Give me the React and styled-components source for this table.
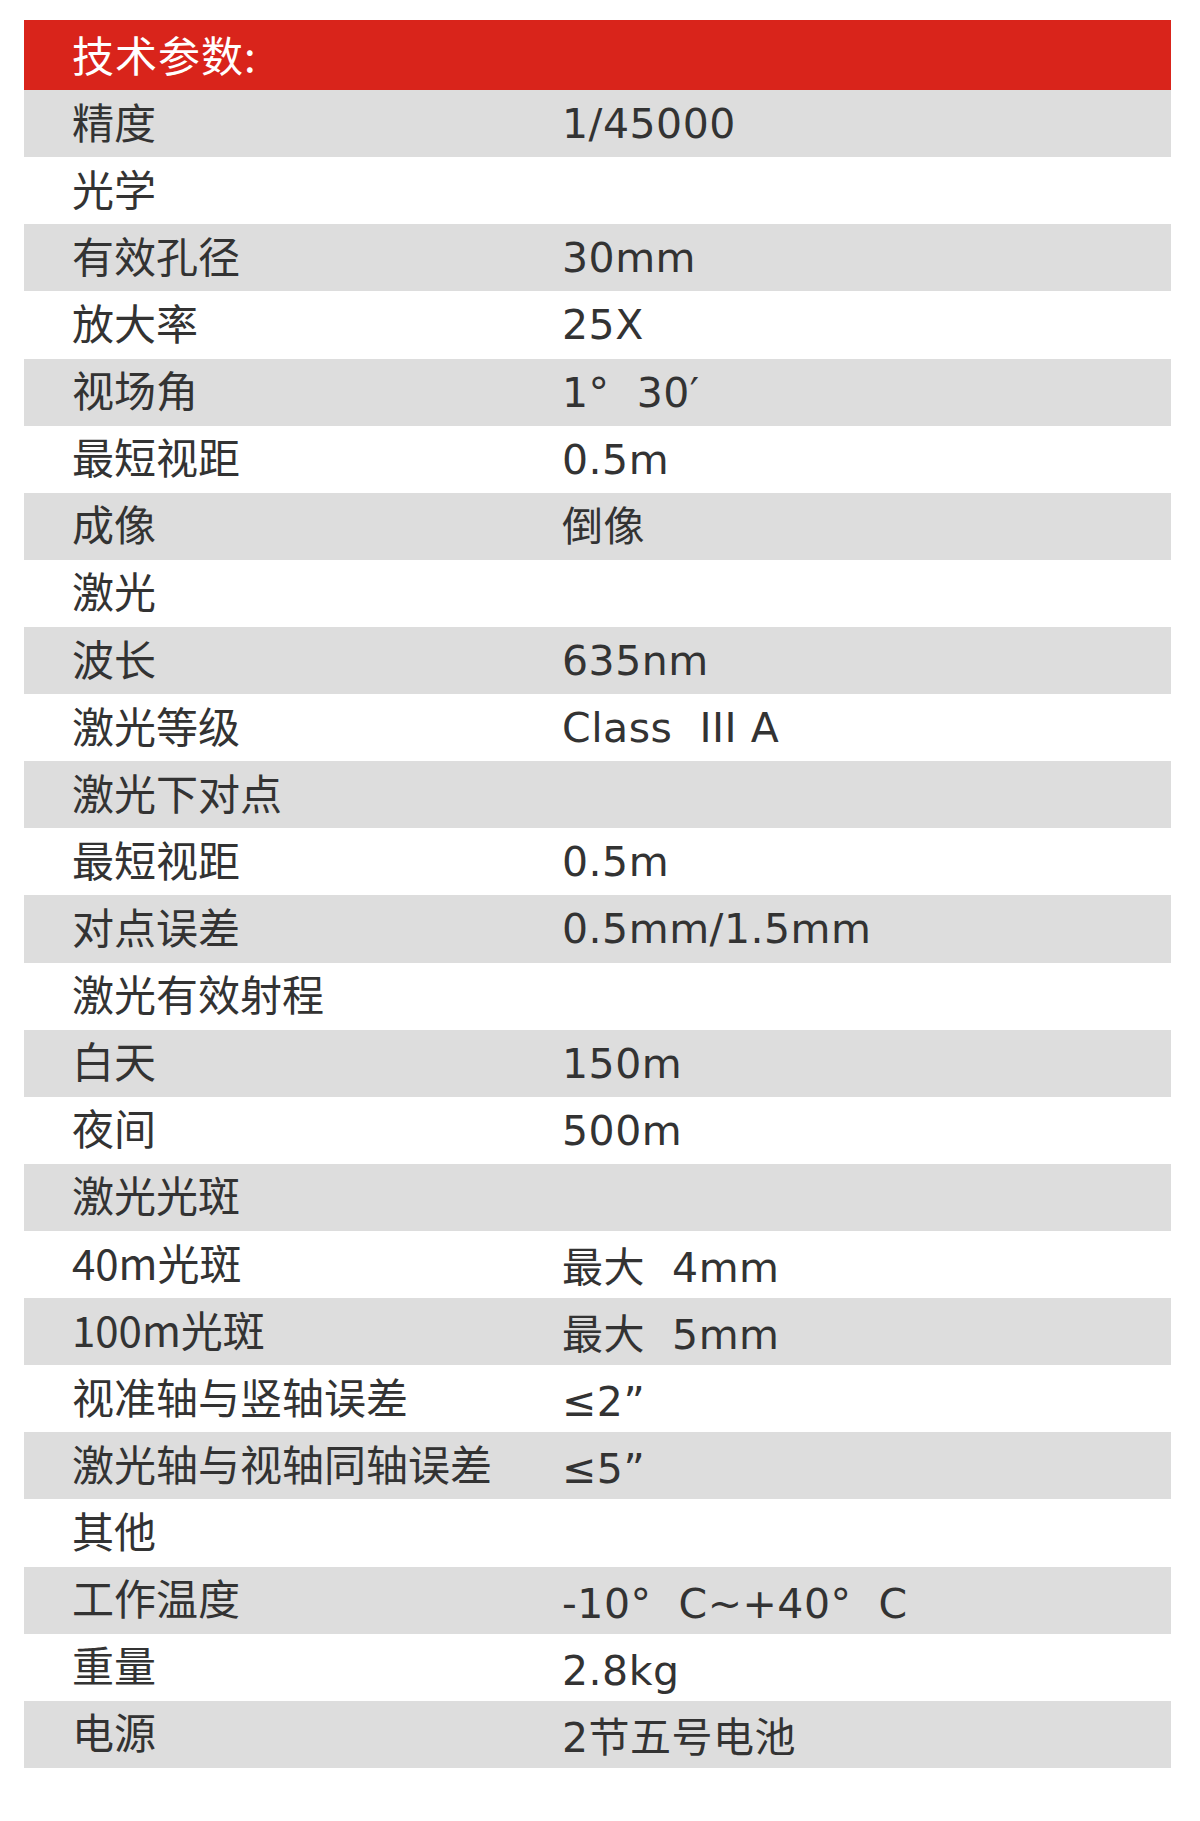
import React from "react";
import styled, { createGlobalStyle } from "styled-components";

const GlobalStyle = createGlobalStyle`
  html, body {
    margin: 0;
    padding: 0;
    background: #ffffff;
  }
`;

const specs = [
  { label: "精度", value: "1/45000" },
  { label: "光学" },
  { label: "有效孔径", value: "30mm" },
  { label: "放大率", value: "25X" },
  { label: "视场角", value: "1°  30′" },
  { label: "最短视距", value: "0.5m" },
  { label: "成像", value: "倒像" },
  { label: "激光" },
  { label: "波长", value: "635nm" },
  { label: "激光等级", value: "Class  III A" },
  { label: "激光下对点" },
  { label: "最短视距", value: "0.5m" },
  { label: "对点误差", value: "0.5mm/1.5mm" },
  { label: "激光有效射程" },
  { label: "白天", value: "150m" },
  { label: "夜间", value: "500m" },
  { label: "激光光斑" },
  { label: "40m光斑", value: "最大  4mm", drop: true },
  { label: "100m光斑", value: "最大  5mm", drop: true },
  { label: "视准轴与竖轴误差", value: "≤2”", drop: true },
  { label: "激光轴与视轴同轴误差", value: "≤5”", drop: true },
  { label: "其他" },
  { label: "工作温度", value: "-10°  C~+40°  C", drop: true },
  { label: "重量", value: "2.8kg", drop: true },
  { label: "电源", value: "2节五号电池", drop: true },
];

const App = () => {
  return (
    <>
      <GlobalStyle />
      <Page>
        <Table>
          <Header>
            <HeaderTitle>技术参数:</HeaderTitle>
          </Header>
          {specs.map((row, i) => (
            <Row key={i} $shaded={i % 2 === 0}>
              <Label>{row.label}</Label>
              <Value $drop={row.drop}>{row.value}</Value>
            </Row>
          ))}
        </Table>
      </Page>
    </>
  );
};

const Page = styled.div`
  width: 1200px;
  height: 1821px;
  padding: 20px 29px 0 24px;
  box-sizing: border-box;
`;

const Table = styled.div`
  display: flex;
  flex-direction: column;
  width: 1147px;
  height: 1748px;
`;

const Header = styled.div`
  flex: 1;
  display: flex;
  align-items: center;
  padding-left: 48px;
  padding-bottom: 3px;
  background: #d9241b;
`;

const HeaderTitle = styled.span`
  font-family: "Noto Sans CJK SC", sans-serif;
  font-size: 42px;
  line-height: 1;
  color: #ffffff;
  letter-spacing: 1px;
`;

const Row = styled.div`
  flex: 1;
  display: grid;
  grid-template-columns: 538px 1fr;
  align-items: center;
  background: ${(p) => (p.$shaded ? "#dddddd" : "#ffffff")};
`;

const Label = styled.div`
  padding-left: 48px;
  padding-bottom: 6px;
  font-family: "Noto Sans CJK SC", sans-serif;
  font-size: 42px;
  line-height: 1;
  color: #333333;
  white-space: nowrap;
`;

const Value = styled.div`
  padding-top: ${(p) => (p.$drop ? "8px" : "2px")};
  font-family: "DejaVu Sans", "Noto Sans CJK SC", sans-serif;
  font-size: 41px;
  line-height: 1;
  letter-spacing: 0.5px;
  color: #333333;
  white-space: pre;
`;

export default App;
